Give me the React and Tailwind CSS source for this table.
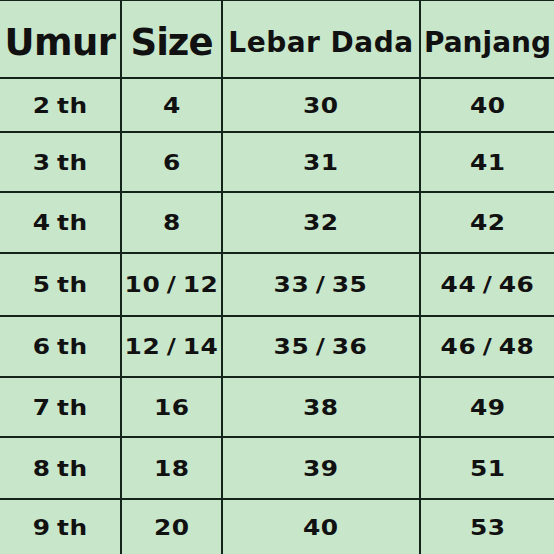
import React from "react";

const rows = [
    ["2 th", "4", "30", "40"],
    ["3 th", "6", "31", "41"],
    ["4 th", "8", "32", "42"],
    ["5 th", "10 / 12", "33 / 35", "44 / 46"],
    ["6 th", "12 / 14", "35 / 36", "46 / 48"],
    ["7 th", "16", "38", "49"],
    ["8 th", "18", "39", "51"],
    ["9 th", "20", "40", "53"],
];

// cell heights between the grid lines
const rowHeights = ["h-[52px]", "h-[58px]", "h-[59px]", "h-[61px]", "h-[59px]", "h-[58px]", "h-[60px]", "h-[54px]"];

const App = () => {
    return (
        <div className="w-[554px] h-[554px] overflow-hidden bg-[#14241a] pt-[1px] font-['DejaVu_Sans',sans-serif] text-[#111]">
            <div className="grid grid-cols-[120px_99px_196px_133px] gap-[2px]">
                {/* header */}
                <div className="h-[76px] bg-[#c8e6ca] flex items-center justify-center pt-[8px] text-[37px] font-bold tracking-[-0.5px]">
                    Umur
                </div>
                <div className="h-[76px] bg-[#c8e6ca] flex items-center justify-center pt-[8px] text-[37px] font-bold tracking-[-1px]">
                    Size
                </div>
                <div className="h-[76px] bg-[#c8e6ca] flex items-center justify-center pt-[8px] text-[28px] font-bold tracking-[0.5px] whitespace-nowrap">
                    Lebar Dada
                </div>
                <div className="h-[76px] bg-[#c8e6ca] flex items-center justify-center pt-[8px] text-[28px] font-bold whitespace-nowrap">
                    Panjang
                </div>

                {/* body */}
                {rows.map((r, i) =>
                    r.map((v, j) => (
                        <div
                            key={`${i}-${j}`}
                            className={`${rowHeights[i]} bg-[#c8e6ca] flex items-center justify-center text-[22px] font-bold`}
                        >
                            <span className="inline-block scale-x-[1.13] tracking-[0.5px] [word-spacing:-2.5px] whitespace-nowrap">
                                {v}
                            </span>
                        </div>
                    ))
                )}
            </div>
        </div>
    );
};

export default App;
